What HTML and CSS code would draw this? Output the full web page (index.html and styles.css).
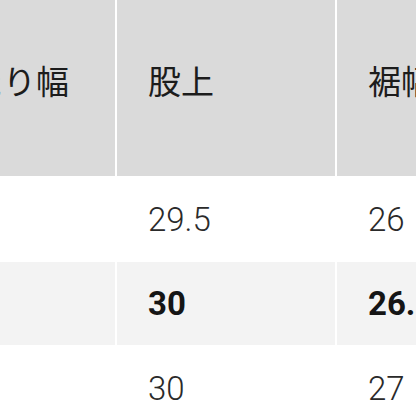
FILE: index.html
```html
<!DOCTYPE html>
<html lang="ja">
<head>
<meta charset="utf-8">
<link rel="stylesheet" href="styles.css">
</head>
<body>
<div class="table">
  <div class="cell head">わたり幅</div>
  <div class="cell head">股上</div>
  <div class="cell head">裾幅</div>

  <div class="cell r1"></div>
  <div class="cell r1">29.5</div>
  <div class="cell r1">26</div>

  <div class="cell r2 hl"></div>
  <div class="cell r2 hl bold">30</div>
  <div class="cell r2 hl bold">26.5</div>

  <div class="cell r3"></div>
  <div class="cell r3">30</div>
  <div class="cell r3">27</div>
</div>
</body>
</html>
```

FILE: styles.css
```css
html, body {
  margin: 0;
  padding: 0;
  background: #ffffff;
  width: 416px;
  height: 416px;
  overflow: hidden;
}

.table {
  display: grid;
  grid-template-columns: 209px 218px 220px;
  grid-template-rows: 176px 86px 83px 86px;
  column-gap: 2px;
  margin-left: -94px;
  width: 651px;
}

.cell {
  display: flex;
  align-items: center;
  padding: 0 31px;
  white-space: nowrap;
  font-family: Roboto, "Noto Sans CJK JP", sans-serif;
  font-weight: 300;
  font-size: 33px;
  line-height: 1;
  color: #2a2a2a;
}

.head {
  align-items: flex-start;
  padding-top: 64px;
  background: #dadada;
  font-family: "Noto Sans CJK JP", sans-serif;
  font-weight: 400;
  font-size: 33px;
  color: #1c1c1c;
}

.hl {
  background: #f3f3f3;
}

.bold {
  font-weight: 700;
  color: #151515;
}
```
